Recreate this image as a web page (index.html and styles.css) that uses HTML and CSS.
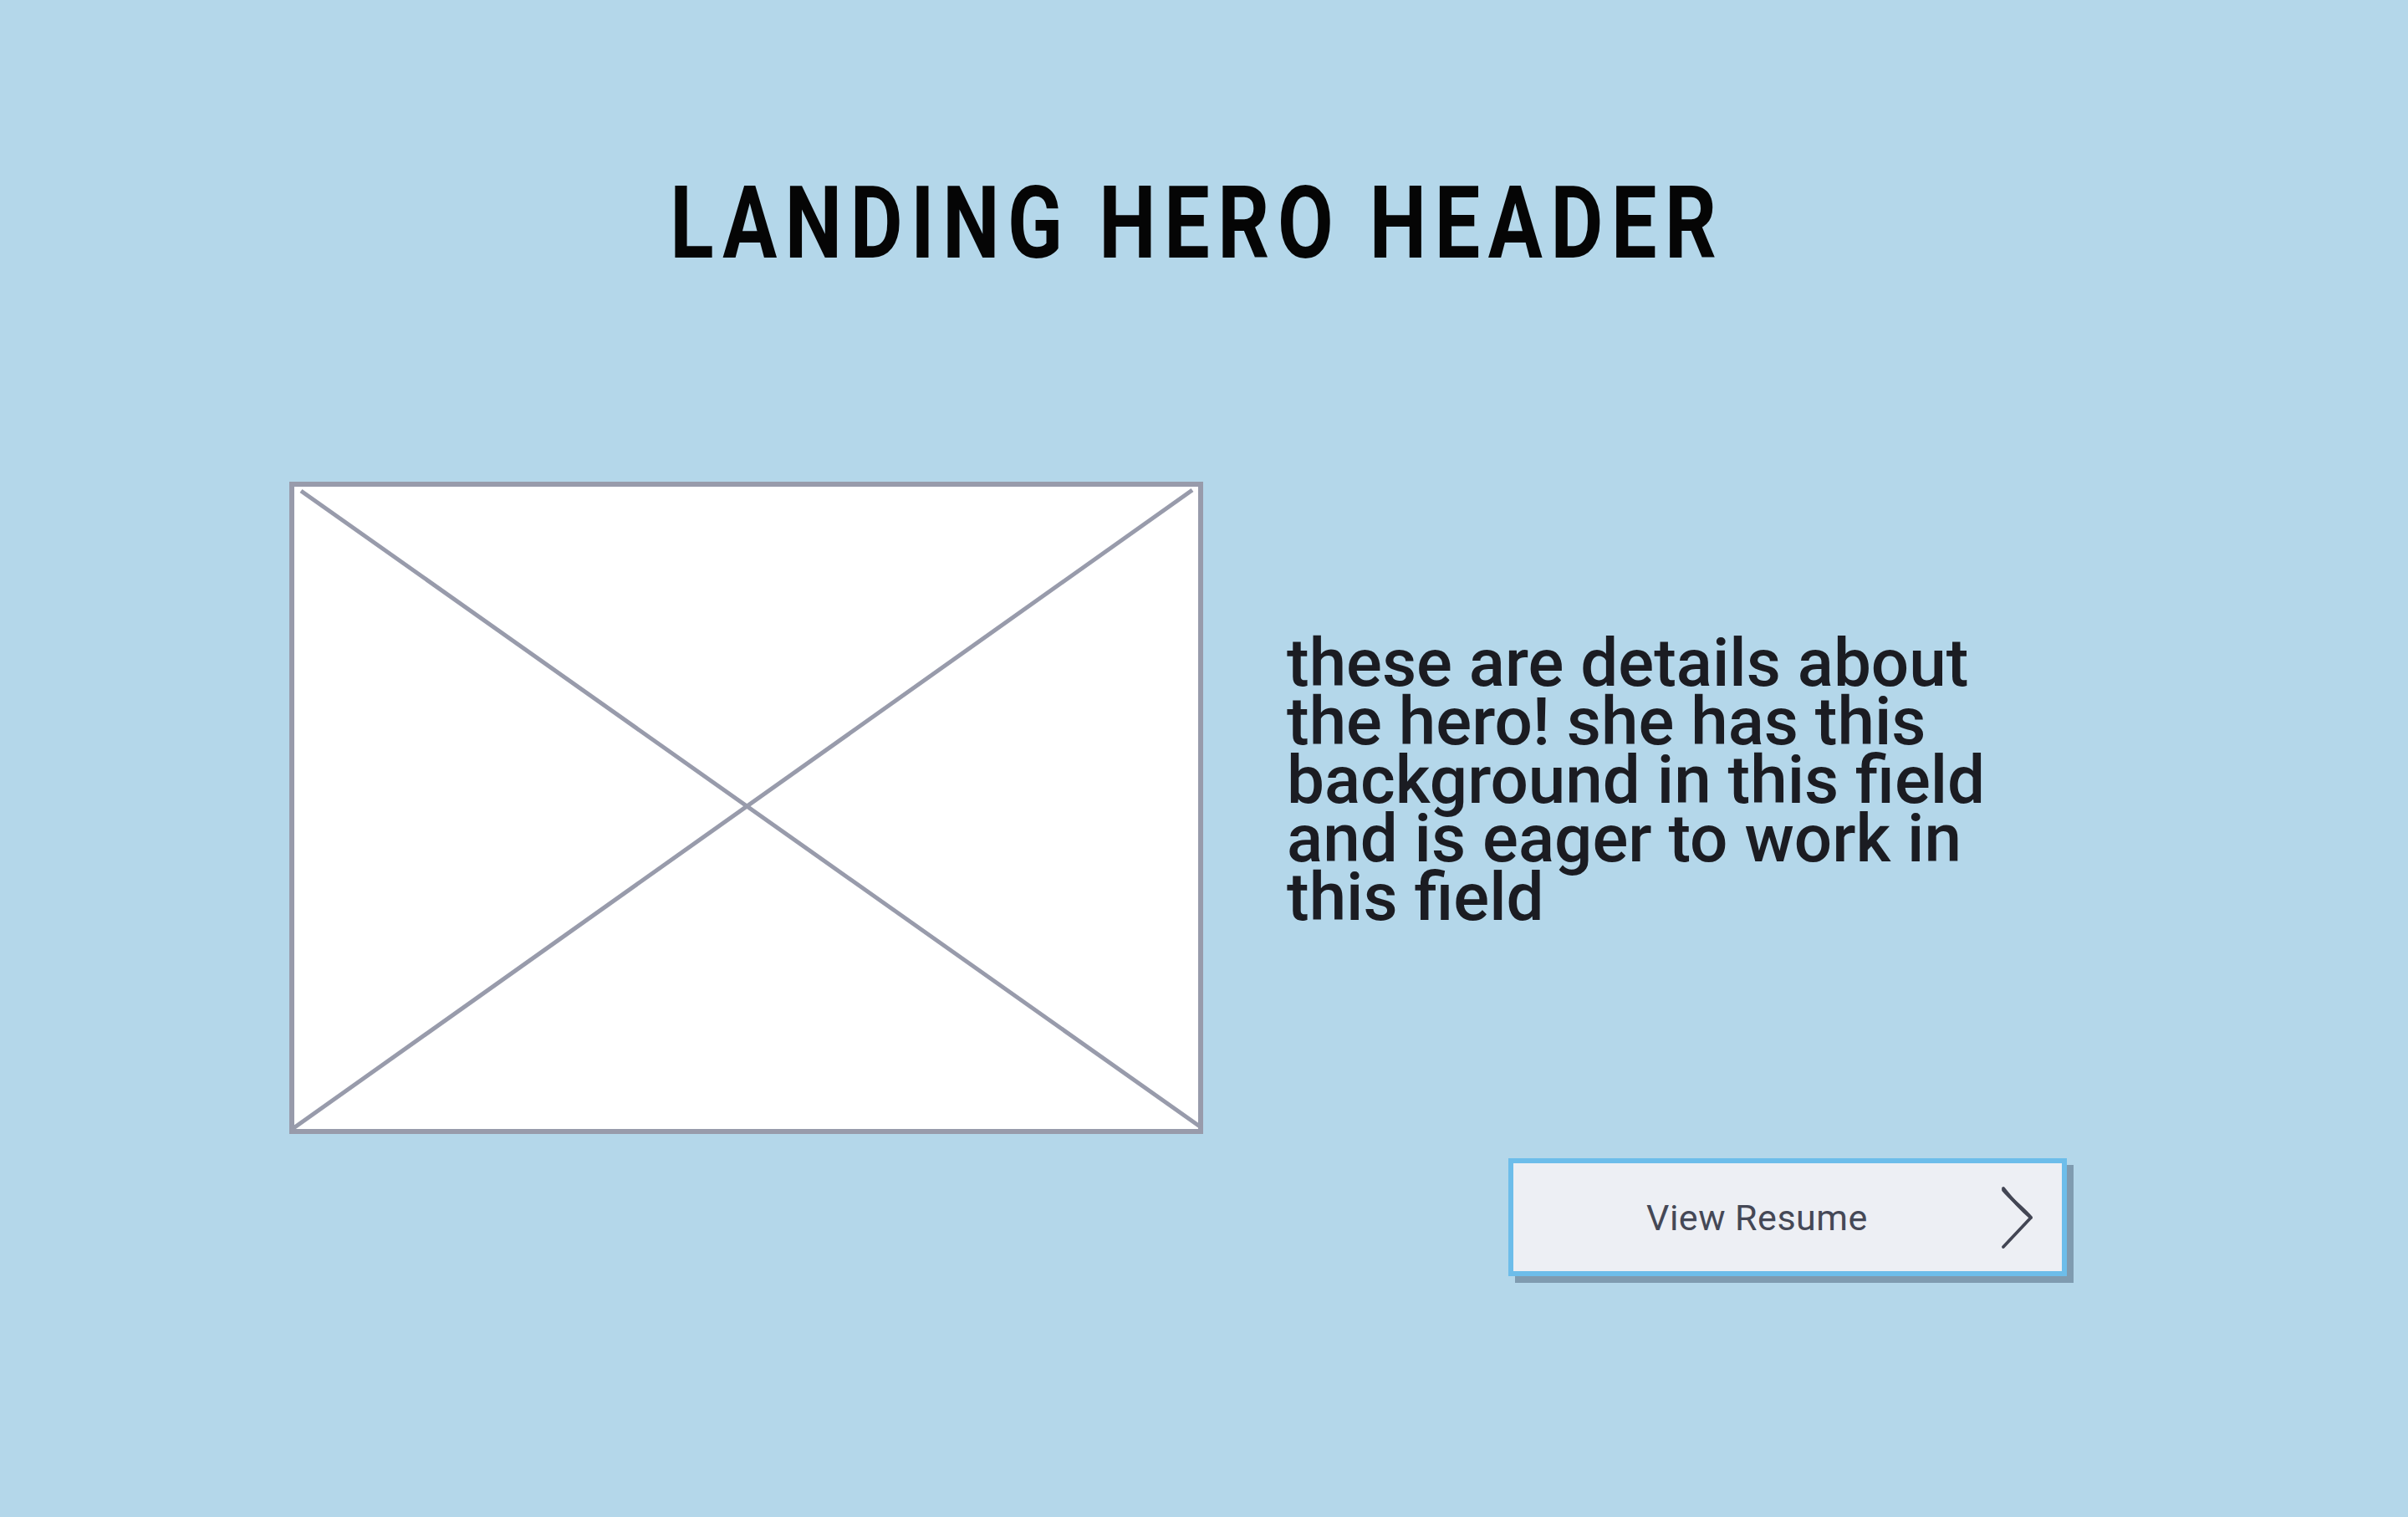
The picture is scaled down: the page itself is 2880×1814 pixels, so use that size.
FILE: index.html
```html
<!DOCTYPE html>
<html lang="en">
<head>
<meta charset="utf-8">
<title>Landing Hero</title>
<link rel="stylesheet" href="styles.css">
</head>
<body>
<main class="page">
  <h1 class="title">LANDING HERO HEADER</h1>
  <section class="hero">
    <div class="media">
      <svg class="media-x" viewBox="0 0 1081 768" preserveAspectRatio="none">
        <line x1="8" y1="5" x2="1083" y2="765"/>
        <line x1="1074" y1="4" x2="-1" y2="767"/>
      </svg>
    </div>
    <div class="info">
      <p class="details">these are details about the hero! she has this background in this field and is eager to work in this field</p>
      <button class="resume-btn" type="button">
        <span class="resume-label">View Resume</span>
        <svg class="chevron" viewBox="0 0 40 76">
          <path d="M3 3 C10 12 22 26 36 38 L3 73"/>
          <path d="M3 5 C12 16 28 28 36 38"/>
        </svg>
      </button>
    </div>
  </section>
</main>
</body>
</html>
```
FILE: styles.css
```css
html, body {
  margin: 0;
  padding: 0;
}
body {
  background: #b4d7ea;
  width: 2880px;
  height: 1814px;
  overflow: hidden;
}
.page {
  display: flex;
  flex-direction: column;
}
.title {
  margin: 0;
  padding: 207px 20px 0 0;
  font-family: Roboto, "Liberation Sans", sans-serif;
  font-weight: 700;
  font-size: 121px;
  line-height: 120px;
  letter-spacing: 12px;
  text-align: center;
  color: #050505;
  transform: scaleX(0.8);
  transform-origin: 1440px 0;
}
.hero {
  display: flex;
  align-items: flex-start;
  margin-top: 249px;
  padding-left: 346px;
}
.media {
  width: 1081px;
  height: 768px;
  border: 6px solid #989bab;
  background: #ffffff;
  flex: none;
}
.media-x {
  display: block;
  width: 100%;
  height: 100%;
  overflow: visible;
}
.media-x line {
  stroke: #989bab;
  stroke-width: 5;
}
.info {
  margin-left: 100px;
  padding-top: 182px;
  display: flex;
  flex-direction: column;
  align-items: flex-start;
}
.details {
  margin: 0;
  width: 860px;
  font-family: Roboto, "Noto Sans", sans-serif;
  font-weight: 500;
  font-size: 80px;
  line-height: 70px;
  color: #1b1c22;
}
.resume-btn {
  margin-top: 277px;
  margin-left: 265px;
  width: 668px;
  height: 141px;
  box-sizing: border-box;
  border: 6px solid #6dbdea;
  background: #edeff4;
  box-shadow: 8px 8px 0 #7f9bb0;
  display: flex;
  align-items: center;
  padding: 0 0 0 159px;
  font-family: Roboto, "Noto Sans", sans-serif;
  font-size: 43px;
  color: #454856;
}
.resume-label {
  letter-spacing: 0.5px;
}
.chevron {
  margin-left: auto;
  margin-right: 33px;
  width: 40px;
  height: 76px;
  fill: none;
  stroke: #434654;
  stroke-width: 3.8;
  stroke-linecap: round;
  stroke-linejoin: round;
}
```
